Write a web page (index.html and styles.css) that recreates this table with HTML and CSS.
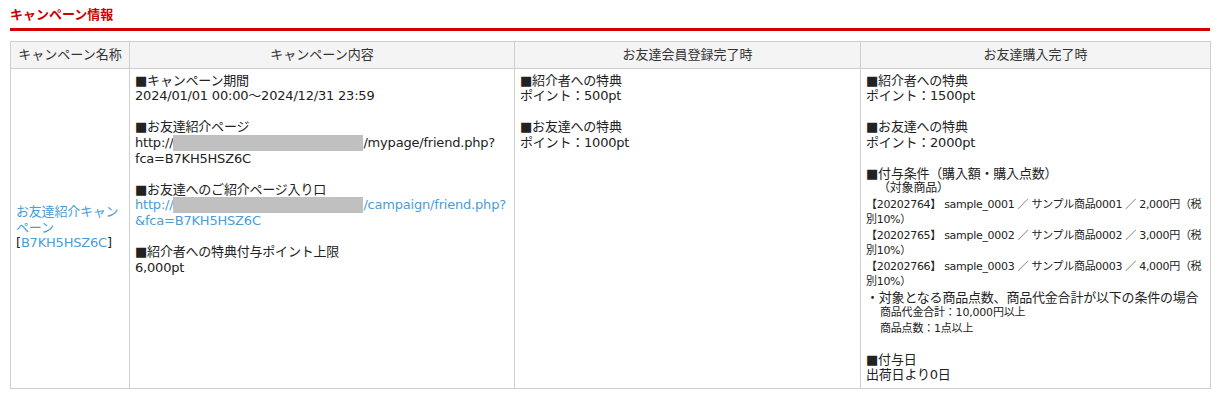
FILE: index.html
```html
<!DOCTYPE html>
<html lang="ja">
<head>
  <meta charset="UTF-8" />
  <meta name="viewport" content="width=device-width, initial-scale=1.0" />
  <title>キャンペーン情報</title>
  <link rel="stylesheet" href="styles.css">
</head>
<body>
  <div class="section">
    <h2 class="section-title">キャンペーン情報</h2>

    <table class="campaign-table">
      <colgroup>
        <col class="col-name">
        <col class="col-detail">
        <col class="col-signup">
        <col class="col-purchase">
      </colgroup>
      <thead>
        <tr>
          <th>キャンペーン名称</th>
          <th>キャンペーン内容</th>
          <th>お友達会員登録完了時</th>
          <th>お友達購入完了時</th>
        </tr>
      </thead>
      <tbody>
        <tr>
          <td class="cell-name">
            <a href="#">お友達紹介キャンペーン</a><br>
            [<a href="#">B7KH5HSZ6C</a>]
          </td>
          <td>
            <div class="block">
              ■キャンペーン期間<br>
              2024/01/01 00:00～2024/12/31 23:59
            </div>
            <div class="block">
              ■お友達紹介ページ<br>
              http://<span class="masked"></span>/mypage/friend.php?<wbr>fca=B7KH5HSZ6C
            </div>
            <div class="block">
              ■お友達へのご紹介ページ入り口<br>
              <a href="#">http://<span class="masked"></span>/campaign/friend.php?<wbr>&amp;fca=B7KH5HSZ6C</a>
            </div>
            <div class="block">
              ■紹介者への特典付与ポイント上限<br>
              6,000pt
            </div>
          </td>
          <td>
            <div class="block">
              ■紹介者への特典<br>
              ポイント：500pt
            </div>
            <div class="block">
              ■お友達への特典<br>
              ポイント：1000pt
            </div>
          </td>
          <td>
            <div class="block">
              ■紹介者への特典<br>
              ポイント：1500pt
            </div>
            <div class="block">
              ■お友達への特典<br>
              ポイント：2000pt
            </div>
            <div class="block">
              ■付与条件（購入額・購入点数）
              <div class="target-label">（対象商品）</div>
              <ul class="item-list">
                <li>【20202764】 sample_0001 ／ サンプル商品0001 ／ 2,000円（税別10%）</li>
                <li>【20202765】 sample_0002 ／ サンプル商品0002 ／ 3,000円（税別10%）</li>
                <li>【20202766】 sample_0003 ／ サンプル商品0003 ／ 4,000円（税別10%）</li>
              </ul>
              ・対象となる商品点数、商品代金合計が以下の条件の場合
              <div class="condition">商品代金合計：10,000円以上</div>
              <div class="condition">商品点数：1点以上</div>
            </div>
            <div class="block">
              ■付与日<br>
              出荷日より0日
            </div>
          </td>
        </tr>
      </tbody>
    </table>
  </div>
</body>
</html>
```

FILE: styles.css
```css
body {
  margin: 0;
  padding: 0 10px;
  background: #fff;
  color: #222;
  font-family: "DejaVu Sans", "Noto Sans CJK JP", sans-serif;
  font-size: 13px;
  line-height: 15.5px;
}

a {
  color: #4a9dd8;
  text-decoration: none;
}

.section-title {
  margin: 0 0 10px;
  padding: 6px 0 6px;
  font-family: "Noto Sans CJK JP", sans-serif;
  font-size: 13px;
  line-height: 16px;
  font-weight: bold;
  color: #cc0000;
  border-bottom: 3px solid #d40000;
}

.campaign-table {
  width: 1200px;
  table-layout: fixed;
  border-collapse: collapse;
}

.col-name { width: 119px; }
.col-detail { width: 385px; }
.col-signup { width: 346px; }
.col-purchase { width: 350px; }

.campaign-table th,
.campaign-table td {
  border: 1px solid #cfcfcf;
  padding: 4px 5px 5px;
}

.campaign-table th {
  height: 15px;
  padding: 5px;
  background: #f3f4f3;
  color: #333;
  font-weight: normal;
  text-align: center;
}

.campaign-table td {
  vertical-align: top;
  letter-spacing: -0.2px;
  overflow-wrap: anywhere;
}

.campaign-table td.cell-name {
  vertical-align: middle;
}

.block + .block {
  margin-top: 15.5px;
}

/* hidden host name in the URLs */
.masked {
  display: inline-block;
  width: 190px;
  height: 16px;
  vertical-align: -4px;
  background: #c0c0c0;
}

.target-label {
  padding-left: 12px;
  font-size: 12px;
}

.item-list {
  margin: 0;
  padding: 0;
  list-style: none;
  font-size: 11px;
  letter-spacing: -0.3px;
}

.condition {
  padding-left: 14px;
  font-size: 11px;
}
```
